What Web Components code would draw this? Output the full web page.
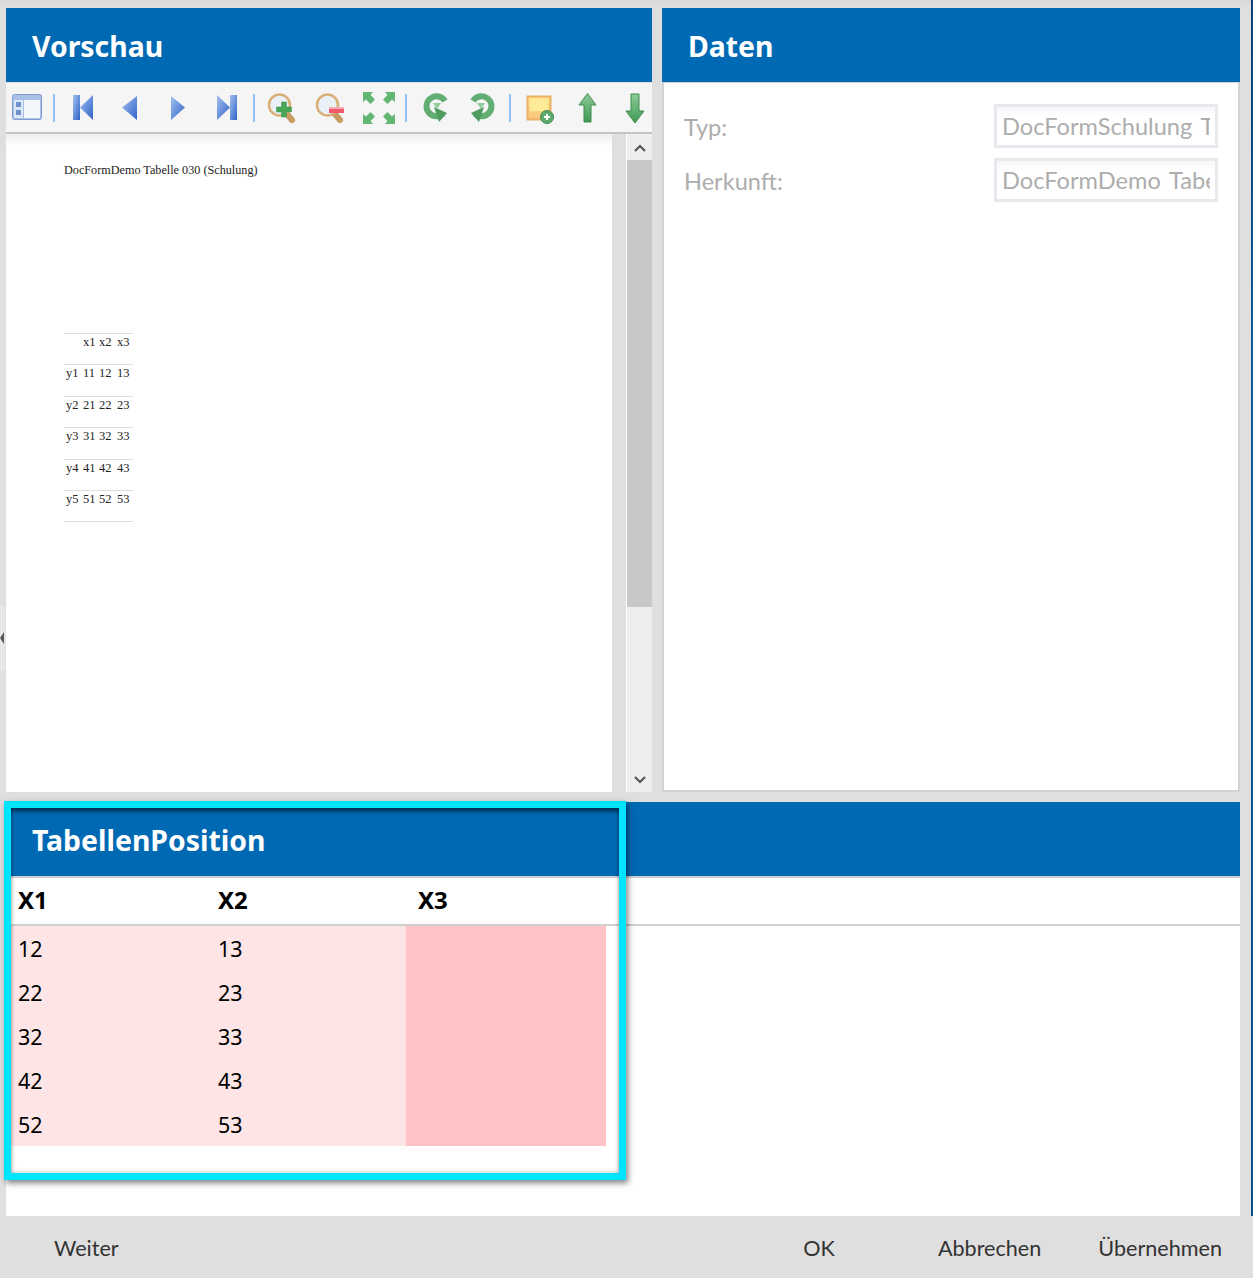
<!DOCTYPE html>
<html lang="de">
<head>
<meta charset="utf-8">
<title>Vorschau</title>
<style>
html, body { margin: 0; padding: 0; background: #dfdfdf; }
</style>
</head>
<body>
<app-shell>
  <x-panel slot="preview" title-text="Vorschau">
    <preview-pane></preview-pane>
  </x-panel>
  <x-panel slot="data" title-text="Daten">
    <data-form></data-form>
  </x-panel>
  <x-panel slot="table" title-text="TabellenPosition">
    <position-table></position-table>
  </x-panel>
  <highlight-box slot="overlay"></highlight-box>
  <footer-bar slot="footer"></footer-bar>
</app-shell>

<script>
const FONT = '"Noto Sans", "Open Sans", sans-serif';
const LIGHT_FONT = 'Lato, "Noto Sans", sans-serif';

customElements.define('app-shell', class extends HTMLElement {
  constructor() {
    super();
    this.attachShadow({ mode: 'open' });
    this.shadowRoot.innerHTML = `
<style>
:host { display: block; position: relative; width: 1253px; height: 1278px; overflow: hidden;
  background: linear-gradient(#d8d8d8, #dfdfdf 8px); font-family: ${FONT}; }
.main { display: grid; grid-template-columns: 646px 578px; grid-template-rows: 784px 414px;
  column-gap: 10px; row-gap: 10px; padding: 8px 0 0 6px; }
.wide { grid-column: 1 / 3; display: block; }
.strip { position: absolute; top: 0; right: 0; bottom: 62px; width: 2px;
  background: linear-gradient(#0d3f73, #0d5c9c 30%, #0a4f8a); }
.handle { position: absolute; left: 0; top: 605px; width: 5px; height: 66px; background: #e8e8e8; border-radius: 0 3px 3px 0; }
.handle::after { content: ""; position: absolute; left: 0; top: 27px; border: 6px solid transparent; border-left: 0; border-right: 4px solid #555; }
</style>
<div class="main">
  <slot name="preview"></slot>
  <slot name="data"></slot>
  <div class="wide"><slot name="table"></slot></div>
</div>
<slot name="overlay"></slot>
<slot name="footer"></slot>
<div class="strip"></div>
<div class="handle"></div>`;
  }
});

customElements.define('x-panel', class extends HTMLElement {
  constructor() {
    super();
    this.attachShadow({ mode: 'open' });
    this.shadowRoot.innerHTML = `
<style>
:host { display: flex; flex-direction: column; height: 100%; min-height: 0; }
h2 { margin: 0; height: 74px; flex: none; background: #0069b4; color: #fff; box-sizing: border-box;
  padding: 0 0 0 26px; font: 700 28.400px/77px ${FONT}; }
.body { flex: 1; min-height: 0; display: flex; flex-direction: column; }
</style>
<h2></h2>
<div class="body"><slot></slot></div>`;
    this.shadowRoot.querySelector('h2').textContent = this.getAttribute('title-text');
  }
});

const ICONS = {
  layout: `<rect x="1.5" y="2.5" width="29" height="25" rx="2" fill="#a9c0e8" stroke="#7f9cd0"/>
    <rect x="3" y="8" width="9" height="18" fill="#dbe6f6"/><rect x="13" y="8" width="16" height="18" fill="#f3f7fc"/>
    <rect x="5" y="10" width="5" height="5" fill="#6f92cf"/><rect x="5" y="18" width="5" height="5" fill="#6f92cf"/>`,
  first: `<rect x="6" y="3" width="7" height="25" fill="url(#b)"/><path d="M13 15.5 26 3v25z" fill="url(#b)"/>`,
  prev: `<path d="M7 15.5 22 4v24z" fill="url(#b)"/>`,
  next: `<path d="M8 4 22 15.5 8 28z" fill="url(#b)"/>`,
  last: `<path d="M6 3 19 15.5 6 28z" fill="url(#b)"/><rect x="19" y="3" width="7" height="25" fill="url(#b)"/>`,
  zoomIn: `<path d="M19 21l6 7" stroke="#c99a62" stroke-width="6" stroke-linecap="round"/>
    <circle cx="12.500" cy="13" r="10.5" fill="#e9f1f6" stroke="#d9ae78" stroke-width="2.5"/>
    <path d="M14.500 10h5v5h5v5h-5v5h-5v-5h-5v-5h5z" fill="#4aa656" stroke="#3c8f49" stroke-width=".5"/>`,
  zoomOut: `<path d="M19 21l6 7" stroke="#c99a62" stroke-width="6" stroke-linecap="round"/>
    <circle cx="12.500" cy="13" r="10.5" fill="#e9f1f6" stroke="#d9ae78" stroke-width="2.5"/>
    <rect x="14" y="15" width="15" height="6" fill="#f2596a"/><rect x="14" y="15" width="15" height="2" fill="#f9aab2"/>`,
  fit: `<g fill="#62b672"><path d="M0 0h10L7.5 3 12 7.500 7.500 12 3 7.500 0 10z"/>
    <path d="M32 0H22l2.500 3L20 7.500 24.500 12 29 7.500l3 2.500z"/>
    <path d="M0 32V22l3 2.500L7.500 20 12 24.500 7.500 29l2.500 3z"/>
    <path d="M32 32H22l2.500-3L20 24.500 24.500 20 29 24.500l3-2.500z"/></g>`,
  redo: `<path d="M26 9A10 10 0 1 0 24 22" fill="none" stroke="#62ad72" stroke-width="6"/>
    <path d="M15 15l13 6-8 9z" fill="#4f9c60"/><path d="M14 11l8 0-4 6z" fill="#8fcb9b"/>`,
  undo: `<path d="M6 9A10 10 0 1 1 8 22" fill="none" stroke="#62ad72" stroke-width="6"/>
    <path d="M17 15 4 21l8 9z" fill="#4f9c60"/><path d="M18 11h-8l4 6z" fill="#8fcb9b"/>`,
  note: `<rect x="4.500" y="4.500" width="23" height="23" fill="url(#n)" stroke="#eeb066" stroke-width="2"/>
    <rect x="7" y="7" width="18" height="12" fill="#fdeb9a"/>
    <circle cx="24" cy="25" r="6.500" fill="#5daa6c" stroke="#3f8b4f"/><path d="M21 25h6M24 22v6" stroke="#fff" stroke-width="2"/>`,
  up: `<path d="M16.500 1.500 25 13h-5v17h-7V13H8z" fill="url(#g)" stroke="#3f8b4f"/>`,
  down: `<path d="M16 31 25 19h-5V2h-8v17H7z" fill="url(#g)" stroke="#3f8b4f"/>`
};

customElements.define('tool-icon', class extends HTMLElement {
  constructor() {
    super();
    this.attachShadow({ mode: 'open' });
    this.shadowRoot.innerHTML = `
<style>:host { display: block; width: 32px; height: 32px; } svg { display: block; overflow: visible; filter: blur(.5px); }</style>
<svg width="32" height="32" viewBox="0 0 32 32">
  <defs>
    <linearGradient id="b" x1="0" x2="1" y1="0" y2="1"><stop offset="0" stop-color="#a3c1f0"/><stop offset="1" stop-color="#2f63c8"/></linearGradient>
    <linearGradient id="g" x1="0" x2="0" y1="0" y2="1"><stop offset="0" stop-color="#8ccb97"/><stop offset="1" stop-color="#3f9a53"/></linearGradient>
    <linearGradient id="n" x1="0" x2="0" y1="0" y2="1"><stop offset="0" stop-color="#fde58a"/><stop offset="1" stop-color="#f8c67a"/></linearGradient>
  </defs>
  ${ICONS[this.getAttribute('name')]}
</svg>`;
  }
});

customElements.define('preview-toolbar', class extends HTMLElement {
  constructor() {
    super();
    this.attachShadow({ mode: 'open' });
    const group = names => `<div class="g">${names.map(n => `<tool-icon name="${n}"></tool-icon>`).join('')}</div>`;
    this.shadowRoot.innerHTML = `
<style>
:host { display: flex; flex: none; align-items: flex-start; box-sizing: border-box; height: 51px;
  margin-top: 1px; padding: 9px 0 0 5px; background: #f5f5f5; border-bottom: 2px solid #c4c4c4; overflow: hidden; }
.g { display: flex; gap: 16px; }
.g:first-child { margin-right: 1px; }
.sep { flex: none; width: 2px; height: 28px; margin: 2px 12px 0 10px; background: #92c0fb; }
</style>
${group(['layout'])}<div class="sep"></div>
${group(['first', 'prev', 'next', 'last'])}<div class="sep"></div>
${group(['zoomIn', 'zoomOut', 'fit'])}<div class="sep"></div>
${group(['redo', 'undo'])}<div class="sep"></div>
${group(['note', 'up', 'down'])}`;
  }
});

customElements.define('doc-page', class extends HTMLElement {
  constructor() {
    super();
    this.attachShadow({ mode: 'open' });
    const rows = [['', 'x1', 'x2', 'x3'], ['y1', 11, 12, 13], ['y2', 21, 22, 23], ['y3', 31, 32, 33], ['y4', 41, 42, 43], ['y5', 51, 52, 53]];
    this.shadowRoot.innerHTML = `
<style>
:host { display: block; flex: 1; min-width: 0; box-sizing: border-box; padding: 28px 0 0 58px;
  background: linear-gradient(#eeeeee, #fff 12px); color: #222; font: 12.200px/16px "Liberation Serif", serif; }
p { margin: 0 0 155px; }
.t { width: 69px; border-bottom: 1px solid #ddd; font-size: 12.500px; }
.r { display: grid; grid-template-columns: 17px 16px 18px 18px; height: 31.400px; box-sizing: border-box;
  padding: 0 0 0 2px; border-top: 1px solid #ddd; line-height: 17px; }
</style>
<p>DocFormDemo Tabelle 030 (Schulung)</p>
<div class="t">${rows.map(r => `<div class="r">${r.map(c => `<span>${c}</span>`).join('')}</div>`).join('')}</div>`;
  }
});

customElements.define('v-scrollbar', class extends HTMLElement {
  constructor() {
    super();
    this.attachShadow({ mode: 'open' });
    this.shadowRoot.innerHTML = `
<style>
:host { display: flex; flex-direction: column; flex: none; width: 25px; margin-left: 14px; background: #eeeeee;
  border-left: 1px solid #fff; }
.btn { height: 26px; box-sizing: border-box; padding-top: 2px; flex: none; display: flex; align-items: center; justify-content: center; }
.track { flex: 1; }
.thumb { height: 447px; background: #c8c8c8; }
svg { display: block; }
</style>
<div class="btn"><svg width="12" height="8" viewBox="0 0 12 8"><path d="M1 7l5-5 5 5" fill="none" stroke="#555" stroke-width="2.200"/></svg></div>
<div class="track"><div class="thumb"></div></div>
<div class="btn"><svg width="12" height="8" viewBox="0 0 12 8"><path d="M1 1l5 5 5-5" fill="none" stroke="#555" stroke-width="2.200"/></svg></div>`;
  }
});

customElements.define('preview-pane', class extends HTMLElement {
  constructor() {
    super();
    this.attachShadow({ mode: 'open' });
    this.shadowRoot.innerHTML = `
<style>
:host { display: flex; flex-direction: column; flex: 1; min-height: 0; }
.row { flex: 1; min-height: 0; display: flex; }
</style>
<preview-toolbar></preview-toolbar>
<div class="row"><doc-page></doc-page><v-scrollbar></v-scrollbar></div>`;
  }
});

customElements.define('form-row', class extends HTMLElement {
  constructor() {
    super();
    this.attachShadow({ mode: 'open' });
    this.shadowRoot.innerHTML = `
<style>
:host { display: flex; align-items: center; justify-content: space-between; height: 44px; color: #adadad;
  font-family: ${LIGHT_FONT}; font-size: 23.600px; word-spacing: 3px; }
.lbl { margin-top: 2px; }
.box { box-sizing: border-box; width: 224px; height: 44px; border: 3px solid #e8e8ee; background: linear-gradient(#f7f7f9, #fff 10px);
  padding: 0 5px; line-height: 38px; }
.clip { overflow: hidden; white-space: nowrap; }
</style>
<span class="lbl"></span>
<div class="box"><div class="clip"></div></div>`;
    this.shadowRoot.querySelector('.lbl').textContent = this.getAttribute('label');
    this.shadowRoot.querySelector('.clip').textContent = this.getAttribute('value');
  }
});

customElements.define('data-form', class extends HTMLElement {
  constructor() {
    super();
    this.attachShadow({ mode: 'open' });
    this.shadowRoot.innerHTML = `
<style>
:host { display: flex; flex-direction: column; gap: 10px; flex: 1; box-sizing: border-box; background: #fff;
  padding: 21px 20px 0 20px; border: solid #d2d2d2; border-width: 1px 2px 2px 2px; }
</style>
<form-row label="Typ:" value="DocFormSchulung Tabelle"></form-row>
<form-row label="Herkunft:" value="DocFormDemo Tabelle 030"></form-row>`;
  }
});

customElements.define('position-table', class extends HTMLElement {
  constructor() {
    super();
    this.attachShadow({ mode: 'open' });
    const rows = [[12, 13], [22, 23], [32, 33], [42, 43], [52, 53]];
    this.shadowRoot.innerHTML = `
<style>
:host { display: block; flex: 1; background: #fff; color: #000; font-size: 21.500px; }
.head { display: grid; grid-template-columns: repeat(3, 200px); height: 50px; box-sizing: border-box;
  border-top: 2px solid #cfcfcf; border-bottom: 2px solid #cfcfcf; font-size: 24px; font-weight: 700; line-height: 43px; }
.row { display: grid; grid-template-columns: repeat(3, 200px); grid-template-rows: 44px; height: 44px; width: 600px; line-height: 46px; }
span { padding-left: 12px; }
.a { background: #fee5e5; }
.b { background: #ffc2c7; }
</style>
<div class="head"><span>X1</span><span>X2</span><span>X3</span></div>
${rows.map(r => `<div class="row"><span class="a">${r[0]}</span><span class="a">${r[1]}</span><span class="b"></span></div>`).join('')}`;
  }
});

customElements.define('highlight-box', class extends HTMLElement {
  constructor() {
    super();
    this.attachShadow({ mode: 'open' });
    this.shadowRoot.innerHTML = `
<style>
:host { display: block; position: absolute; left: 4px; top: 801px; width: 622px; height: 379px; box-sizing: border-box;
  border: 7px solid #00e5ff; box-shadow: 2px 3px 6px rgba(0,0,0,.5), inset 0 5px 5px -2px rgba(0,0,0,.55), inset 0 0 5px rgba(0,0,0,.3); }
</style>`;
  }
});

customElements.define('footer-bar', class extends HTMLElement {
  constructor() {
    super();
    this.attachShadow({ mode: 'open' });
    this.shadowRoot.innerHTML = `
<style>
:host { display: flex; box-sizing: border-box; height: 62px; padding: 2px 31px 0 54px; align-items: center; color: #333;
  font-family: ${LIGHT_FONT}; font-size: 21.600px; background: #dfdfdf; }
.push { margin-left: auto; }
.m { margin-left: 103px; }
.l { margin-left: 57px; }
</style>
<span>Weiter</span>
<span class="push">OK</span>
<span class="m">Abbrechen</span>
<span class="l">Übernehmen</span>`;
  }
});
</script>
</body>
</html>
